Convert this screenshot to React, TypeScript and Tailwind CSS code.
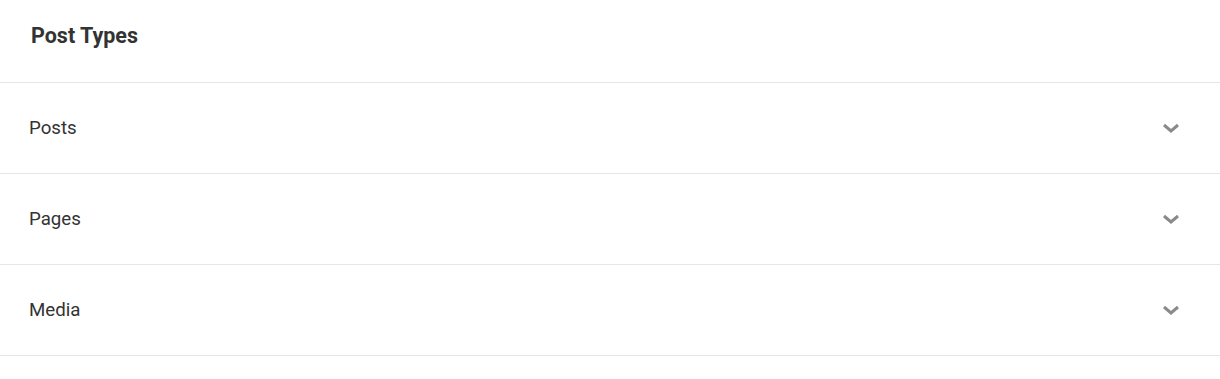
const postTypes = ["Posts", "Pages", "Media"]

function Chevron() {
  return (
    <svg width="18" height="10" viewBox="0 0 18 10" className="text-[#8a8a8a]">
      <path d="M2 2 L9 8 L16 2" fill="none" stroke="currentColor" strokeWidth="3" />
    </svg>
  )
}

export default function App() {
  return (
    <div className="w-full bg-white font-['Roboto',sans-serif] text-[#333]">
      <div className="h-[83px] border-b border-[#e6e6e6] pl-[31px] pt-[22px]">
        <h2 className="text-[21.5px] font-bold leading-[28px] text-[#333]">Post Types</h2>
      </div>
      {postTypes.map((name) => (
        <div
          key={name}
          className="flex h-[91px] items-center justify-between border-b border-[#e6e6e6] pl-[29px] pr-[40px]"
        >
          <span className="text-[18.7px] leading-[24px]">{name}</span>
          <Chevron />
        </div>
      ))}
    </div>
  )
}
